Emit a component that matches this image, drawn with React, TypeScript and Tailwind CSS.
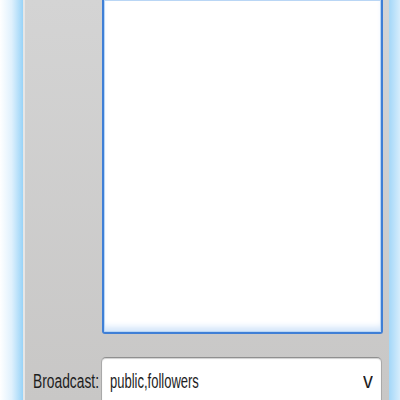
export default function App() {
  return (
    <div className="w-[400px] h-[400px] overflow-hidden flex bg-white" style={{ fontFamily: '"Liberation Sans", Arial, sans-serif' }}>
      {/* left window glow */}
      <div className="w-[23px] h-full bg-gradient-to-r from-white via-[#e0f1fd] to-[#98d3f7]" />
      <div className="w-[2px] h-full bg-[#e6e6e6]" />

      {/* dialog body */}
      <div className="flex-1 h-full flex flex-col bg-gradient-to-b from-[#d4d4d4] to-[#c8c7c6]">
        <div className="flex">
          <div className="w-[77px]" />
          <div className="w-[281px] h-[334px] bg-white border-2 border-t-0 border-[#3f7fd6] rounded-b-[3px] shadow-[inset_0_0_0_1px_#b9d6f5,inset_0_-7px_6px_-2px_#d3e5fa]" />
        </div>

        <div className="flex items-start mt-[23px]">
          <div className="w-[76px] pl-[8px] pt-[13px]">
            <span className="block text-[20px] leading-[22px] text-[#1e1e1e] origin-left scale-x-[0.69] whitespace-nowrap">
              Broadcast:
            </span>
          </div>
          <div className="w-[281px] h-[50px] bg-white border border-[#a9a9a9] border-t-[#8f8f8f] rounded-t-[5px] shadow-[inset_0_1px_1px_#d0d0d0] flex items-start justify-between pl-[8px] pr-[8px] pt-[12px]">
            <span className="block text-[20px] leading-[22px] text-[#1e1e1e] origin-left scale-x-[0.65] whitespace-nowrap">
              public,followers
            </span>
            <span className="block text-[22px] leading-[22px] text-[#1e1e1e] origin-right scale-x-[0.9]">v</span>
          </div>
        </div>
      </div>

      {/* right window glow */}
      <div className="w-[11px] h-full bg-gradient-to-r from-[#a3d7f8] to-[#d6edfc]" />
    </div>
  );
}
